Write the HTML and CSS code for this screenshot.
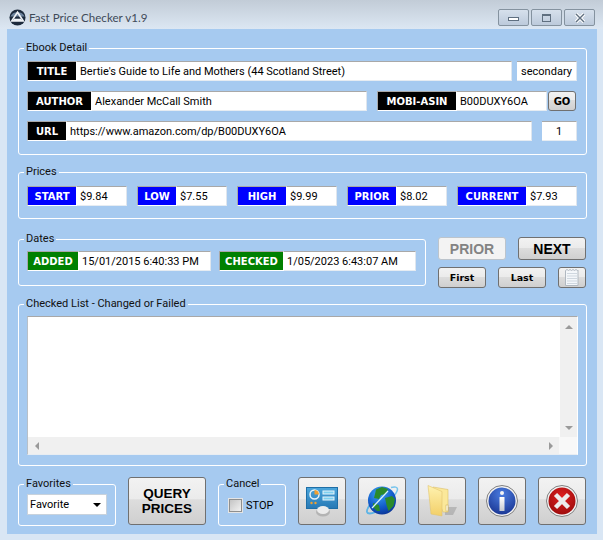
FILE: index.html
```html
<!DOCTYPE html>
<html lang="en">
<head>
  <meta charset="UTF-8" />
  <title>Fast Price Checker v1.9</title>
  <link rel="stylesheet" href="styles.css">
</head>
<body>
  <div class="window">
    <div class="titlebar">
      <svg class="app-icon" width="17" height="17" viewBox="0 0 18 18">
        <circle cx="9" cy="9" r="8.500" fill="#1c2a3c"/>
        <path d="M1.500 8a8 7 0 0 1 15 0z" fill="#7f98b4" opacity="0.8"/>
        <path d="M9 3.500L15 12.500H3z" fill="none" stroke="#eef2f6" stroke-width="1.800"/>
        <path d="M5 11h8" stroke="#eef2f6" stroke-width="1.400"/>
      </svg>
      <span class="app-title">Fast Price Checker v1.9</span>
      <div class="win-buttons">
        <div class="win-btn"><span class="min-glyph"></span></div>
        <div class="win-btn"><span class="max-glyph"></span></div>
        <div class="win-btn">
          <svg width="12" height="10" viewBox="0 0 12 10"><path d="M2 1l8 8M10 1l-8 8" stroke="#fff" stroke-width="3.400"/><path d="M2 1l8 8M10 1l-8 8" stroke="#5f6f80" stroke-width="1.400"/></svg>
        </div>
      </div>
    </div>

    <div class="client">
      <fieldset class="group detail">
        <legend>Ebook Detail</legend>
        <div class="row">
          <div class="field title-field"><span class="tag black w50">TITLE</span><span class="box grow">Bertie's Guide to Life and Mothers (44 Scotland Street)</span></div>
          <span class="box center secondary">secondary</span>
        </div>
        <div class="row">
          <div class="field author-field"><span class="tag black w65">AUTHOR</span><span class="box grow">Alexander McCall Smith</span></div>
          <div class="field asin-field"><span class="tag black w80">MOBI-ASIN</span><span class="box grow">B00DUXY6OA</span></div>
          <button class="btn go">GO</button>
        </div>
        <div class="row">
          <div class="field url-field"><span class="tag black w40">URL</span><span class="box grow">https://www.amazon.com/dp/B00DUXY6OA</span></div>
          <span class="box center count">1</span>
        </div>
      </fieldset>

      <fieldset class="group prices">
        <legend>Prices</legend>
        <div class="row price-row">
          <div class="field price"><span class="tag blue w50">START</span><span class="box grow">$9.84</span></div>
          <div class="field price-low"><span class="tag blue w40">LOW</span><span class="box grow">$7.55</span></div>
          <div class="field price"><span class="tag blue w50">HIGH</span><span class="box grow">$9.99</span></div>
          <div class="field price"><span class="tag blue w50">PRIOR</span><span class="box grow">$8.02</span></div>
          <div class="field price-wide"><span class="tag blue w70">CURRENT</span><span class="box grow">$7.93</span></div>
        </div>
      </fieldset>

      <div class="dates-line">
        <fieldset class="group dates">
          <legend>Dates</legend>
          <div class="row date-row">
            <div class="field added"><span class="tag green w52">ADDED</span><span class="box grow">15/01/2015 6:40:33 PM</span></div>
            <div class="field checked"><span class="tag green w65">CHECKED</span><span class="box grow">1/05/2023 6:43:07 AM</span></div>
          </div>
        </fieldset>
        <div class="nav">
          <div class="nav-top">
            <button class="btn big" disabled>PRIOR</button>
            <button class="btn big">NEXT</button>
          </div>
          <div class="nav-bottom">
            <button class="btn small">First</button>
            <button class="btn small">Last</button>
            <button class="btn note">
              <svg width="14" height="17" viewBox="0 0 14 17">
                <path d="M.5 1.500l1.500-1 1.500 1 1.500-1 1.500 1 1.500-1 1.500 1 1.500-1 1.500 1 .5-.5v15.500H.5z" fill="#f4f7fa" stroke="#b0b8c0"/>
                <path d="M2 4.500h10M2 7h10M2 9.500h10M2 12h10M2 14.500h10" stroke="#cfd7df"/>
              </svg>
            </button>
          </div>
        </div>
      </div>

      <fieldset class="group list-group">
        <legend>Checked List - Changed or Failed</legend>
        <div class="listbox">
          <div class="list-main">
            <div class="list-white"></div>
            <div class="vscroll"><span class="arrow-up"></span><span class="arrow-down"></span></div>
          </div>
          <div class="hscroll-line">
            <div class="hscroll"><span class="arrow-left"></span><span class="arrow-right"></span></div>
          </div>
        </div>
      </fieldset>

      <div class="bottom">
        <fieldset class="group favorites">
          <legend>Favorites</legend>
          <div class="combo"><span>Favorite</span><span class="combo-arrow"></span></div>
        </fieldset>
        <button class="btn query">QUERY<br>PRICES</button>
        <fieldset class="group cancel">
          <legend>Cancel</legend>
          <label class="stop"><span class="check"></span>STOP</label>
        </fieldset>
        <button class="btn tool">
          <svg width="34" height="34" viewBox="0 0 34 34">
            <defs><linearGradient id="panel" x1="0" y1="0" x2="0" y2="1"><stop offset="0" stop-color="#4aa6dc"/><stop offset="1" stop-color="#2778b4"/></linearGradient></defs>
            <rect x="1.500" y="3.500" width="31" height="21" fill="url(#panel)" stroke="#1e6ea6"/>
            <circle cx="9.500" cy="10.500" r="4.500" fill="none" stroke="#e8f4fa" stroke-width="1.500"/>
            <path d="M9.500 6a4.500 4.500 0 0 1 4.500 4.500h-4.500z" fill="#f0a030"/>
            <rect x="18" y="7" width="11" height="3" fill="#7fd0f0" stroke="#e8f4fa"/>
            <rect x="18" y="13" width="11" height="3" fill="#7fd0f0" stroke="#e8f4fa"/>
            <circle cx="6.500" cy="19" r="1.200" fill="#f0a030"/><circle cx="10.500" cy="19" r="1.200" fill="#f0a030"/>
            <ellipse cx="18" cy="28" rx="7" ry="4.500" fill="#b4b4b4"/>
            <ellipse cx="18" cy="26" rx="6" ry="4" fill="#ececec"/>
          </svg>
        </button>
        <button class="btn tool">
          <svg width="34" height="34" viewBox="0 0 34 34">
            <defs><radialGradient id="sea" cx="0.400" cy="0.250" r="0.850"><stop offset="0" stop-color="#3ca4f4"/><stop offset="0.600" stop-color="#1058c8"/><stop offset="1" stop-color="#0a2c88"/></radialGradient></defs>
            <path d="M26 3.500c4-1 6.500-.5 6.500 1.500 0 2-1.500 4.500-3.500 7" fill="none" stroke="#74c4ee" stroke-width="1.500"/>
            <path d="M6 19c-2.500 3.500-4.500 7-4 9 .5 2 4 2 8.500 0" fill="none" stroke="#5cb4e6" stroke-width="1.800"/>
            <circle cx="17" cy="16.500" r="14" fill="url(#sea)"/>
            <path d="M11 5.500l6-2.500 6 2-2 5-5 1-2 4-5-1 1-4zM20 14l7-2 3 3-1.500 7-5 5-2-6zM8 19l6 2 1 6-3 0-4-4z" fill="#2a8a2c"/>
            <path d="M7 24L23 7" stroke="#d8f2fa" stroke-width="1.200"/>
          </svg>
        </button>
        <button class="btn tool">
          <svg width="34" height="34" viewBox="0 0 34 34">
            <defs><linearGradient id="fold" x1="0" y1="0" x2="0" y2="1"><stop offset="0" stop-color="#fff2b0"/><stop offset="1" stop-color="#f2cf68"/></linearGradient></defs>
            <path d="M20 23h12l-4 8H20z" fill="#7a7a7a" opacity="0.350"/>
            <path d="M8 3l15 2.500V28H18z" fill="#fbe89a" stroke="#dcc06a" stroke-width="0.600"/>
            <path d="M3 1.500l14 6V32L6 30z" fill="url(#fold)" stroke="#e0c470" stroke-width="0.600"/>
            <rect x="21" y="21" width="2" height="6" fill="#fffbe8" stroke="#c8a850" stroke-width="0.500"/>
          </svg>
        </button>
        <button class="btn tool">
          <svg width="34" height="34" viewBox="0 0 34 34">
            <defs><radialGradient id="blue" cx="0.500" cy="0.250" r="0.850"><stop offset="0" stop-color="#4a7ce0"/><stop offset="1" stop-color="#16308c"/></radialGradient><linearGradient id="stem" x1="0" y1="0" x2="0" y2="1"><stop offset="0" stop-color="#fff"/><stop offset="1" stop-color="#c4c8d0"/></linearGradient></defs>
            <circle cx="17" cy="17" r="15.500" fill="#f2f2f2" stroke="#808080"/>
            <circle cx="17" cy="17" r="13.500" fill="url(#blue)"/>
            <circle cx="17" cy="9" r="2" fill="#f4f4f4"/>
            <rect x="14.500" y="13" width="5" height="14" rx="0.500" fill="url(#stem)"/>
          </svg>
        </button>
        <button class="btn tool">
          <svg width="34" height="34" viewBox="0 0 34 34">
            <defs><radialGradient id="red" cx="0.500" cy="0.350" r="0.800"><stop offset="0" stop-color="#e02020"/><stop offset="1" stop-color="#900808"/></radialGradient></defs>
            <circle cx="17" cy="17" r="15.500" fill="#f2f2f2" stroke="#808080"/>
            <circle cx="17" cy="17" r="13.500" fill="url(#red)"/>
            <path d="M10.500 10.500l13 13M23.500 10.500l-13 13" stroke="#ececec" stroke-width="4.500"/>
          </svg>
        </button>
      </div>
    </div>
  </div>
</body>
</html>
```
FILE: styles.css
```css
html, body {
  margin: 0;
  padding: 0;
}
body {
  width: 603px;
  height: 540px;
  overflow: hidden;
  font-family: Roboto, "Liberation Sans", sans-serif;
  font-size: 11px;
  color: #000;
}
.window {
  height: 540px;
  display: flex;
  flex-direction: column;
  background: #d9e6f4;
}
.titlebar {
  box-sizing: border-box;
  height: 29px;
  display: flex;
  align-items: flex-start;
  padding: 9px 8px 0 9px;
  background: linear-gradient(#c2ccd7, #dce7f3);
}
.app-icon {
  margin-right: 3px;
}
.app-title {
  font-family: Lato, sans-serif;
  font-size: 11.600px;
  line-height: 18px;
  color: #3f4a58;
}
.win-buttons {
  margin-left: auto;
  display: flex;
  gap: 2px;
}
.win-btn {
  width: 29px;
  height: 15px;
  border: 1px solid #84929f;
  border-radius: 2px;
  background: linear-gradient(#d6e0ec, #bccadb);
  display: flex;
  align-items: center;
  justify-content: center;
}
.min-glyph {
  width: 9px;
  height: 2px;
  margin-top: 3px;
  border: 1px solid #5f6f80;
  background: #fff;
}
.max-glyph {
  width: 7px;
  height: 5px;
  border: 1px solid #5f6f80;
  border-top-width: 2px;
}
.client {
  margin: 0 6px 6px 7px;
  flex: 1;
  background: #a6caf0;
  padding: 12px 10px 0 11px;
  display: flex;
  flex-direction: column;
}
.group {
  box-sizing: border-box;
  margin: 0;
  padding: 0 8px;
  min-width: 0;
  border: 1px solid #fff;
  border-radius: 3px;
}
.group legend {
  margin-left: -3px;
  padding: 0 2px;
  font-family: Roboto, sans-serif;
  font-size: 11px;
  line-height: 14px;
  color: #111;
}
.detail {
  height: 114px;
  padding-top: 6px;
}
.row {
  display: flex;
  align-items: stretch;
  height: 20px;
}
.detail .row {
  margin-bottom: 10px;
}
.field {
  display: flex;
}
.tag {
  display: flex;
  align-items: center;
  justify-content: center;
  flex: none;
  box-sizing: border-box;
  height: 20px;
  border: 1px solid #fff;
  border-top-color: #a8a8a8;
  border-left-color: #a8a8a8;
  color: #fff;
  font-family: "DejaVu Sans", sans-serif;
  font-weight: bold;
  font-size: 10px;
}
.black { background: #000; }
.blue { background: #0000ff; }
.green { background: #008000; }
.w40 { width: 40px; }
.w50 { width: 50px; }
.w52 { width: 52px; }
.w65 { width: 65px; }
.w70 { width: 70px; }
.w80 { width: 80px; }
.box {
  box-sizing: border-box;
  height: 20px;
  line-height: 19px;
  background: #fff;
  border-top: 1px solid #a8a8a8;
  border-right: 1px solid #dfe6ee;
  border-bottom: 1px solid #e6ecf2;
  padding-left: 3px;
  white-space: nowrap;
  overflow: hidden;
}
.grow { flex: 1; }
.center {
  text-align: center;
  padding-left: 0;
}
.title-field { width: 485px; }
.secondary { width: 60px; margin-left: 5px; }
.author-field { width: 340px; }
.asin-field { width: 170px; margin-left: 10px; }
.go {
  width: 28px;
  margin-left: 1px;
  font-size: 10px;
}
.url-field { width: 505px; }
.count { width: 35px; margin-left: 10px; }

.prices {
  height: 54px;
  margin-top: 10px;
}
.price-row {
  margin-top: 7px;
}
.price-row .field + .field {
  margin-left: 10px;
}
.price { width: 100px; }
.price-low { width: 90px; }
.price-wide { width: 120px; }

.dates-line {
  display: flex;
  margin-top: 13px;
  height: 54px;
}
.dates {
  width: 408px;
  height: 54px;
}
.date-row {
  margin-top: 5px;
}
.added { width: 184px; }
.checked { width: 197px; margin-left: 8px; }
.nav {
  margin: 5px 0 0 12px;
  width: 148px;
  display: flex;
  flex-direction: column;
  gap: 7px;
}
.nav-top {
  display: flex;
  justify-content: space-between;
}
.nav-bottom {
  display: flex;
  gap: 12px;
}

.btn {
  box-sizing: border-box;
  padding: 0;
  border: 1px solid #707070;
  border-radius: 3px;
  background: linear-gradient(#f2f2f2 0, #ebebeb 46%, #dddddd 47%, #cfcfcf 100%);
  font-family: "DejaVu Sans", sans-serif;
  font-weight: bold;
  color: #000;
}
.btn:disabled {
  border-color: #bcc4cc;
  background: #f3f3f3;
  color: #838383;
}
.big {
  width: 68px;
  height: 23px;
  font-family: "Liberation Sans", sans-serif;
  font-size: 14px;
}
.small {
  width: 48px;
  height: 21px;
  font-size: 9.500px;
}
.note {
  width: 28px;
  height: 21px;
  display: flex;
  align-items: center;
  justify-content: center;
}

.list-group {
  height: 169px;
  margin-top: 11px;
}
.listbox {
  box-sizing: border-box;
  height: 139px;
  margin-top: 5px;
  border-top: 1px solid #a8a8a8;
  border-left: 1px solid #b8c0c8;
  border-right: 1px solid #fff;
  border-bottom: 1px solid #e8edf2;
  background: #fff;
  display: flex;
  flex-direction: column;
}
.list-main {
  flex: 1;
  display: flex;
}
.list-white {
  flex: 1;
}
.vscroll {
  width: 17px;
  background: #f0f0f0;
  display: flex;
  flex-direction: column;
  justify-content: space-between;
  align-items: center;
  padding: 8px 0 7px;
}
.hscroll-line {
  height: 17px;
  background: #f8f8f8;
  display: flex;
}
.hscroll {
  flex: 1;
  margin-right: 18px;
  background: #f0f0f0;
  display: flex;
  justify-content: space-between;
  align-items: center;
  padding: 0 6px 0 7px;
}
.arrow-up, .arrow-down, .arrow-left, .arrow-right {
  width: 0;
  height: 0;
  border: 4px solid transparent;
}
.arrow-up { border-bottom-color: #9a9a9a; border-top-width: 0; }
.arrow-down { border-top-color: #9a9a9a; border-bottom-width: 0; }
.arrow-left { border-right-color: #9a9a9a; border-left-width: 0; }
.arrow-right { border-left-color: #9a9a9a; border-right-width: 0; }

.bottom {
  display: flex;
  margin-top: 11px;
  gap: 12px;
  height: 49px;
  align-items: flex-start;
}
.favorites {
  width: 98px;
  height: 49px;
}
.combo {
  box-sizing: border-box;
  height: 21px;
  margin-top: 3px;
  background: #fff;
  border: 1px solid #c8d2dc;
  display: flex;
  align-items: center;
  justify-content: space-between;
  padding: 0 5px 0 2px;
}
.combo-arrow {
  width: 0;
  height: 0;
  border: 4px solid transparent;
  border-top-color: #000;
  border-bottom-width: 0;
}
.query {
  width: 78px;
  height: 48px;
  font-family: "Liberation Sans", sans-serif;
  font-size: 13.500px;
  line-height: 15px;
}
.cancel {
  width: 68px;
  height: 49px;
}
.stop {
  display: flex;
  align-items: center;
  gap: 4px;
  height: 22px;
  margin: 3px 0 0 2px;
}
.check {
  width: 11px;
  height: 11px;
  border: 1px solid #8e8f8f;
  background: linear-gradient(135deg, #c4c4c4, #f2f2f2);
  outline: 1px solid #e4e4e4;
}
.tool {
  width: 48px;
  height: 48px;
  display: flex;
  align-items: center;
  justify-content: center;
}
```
